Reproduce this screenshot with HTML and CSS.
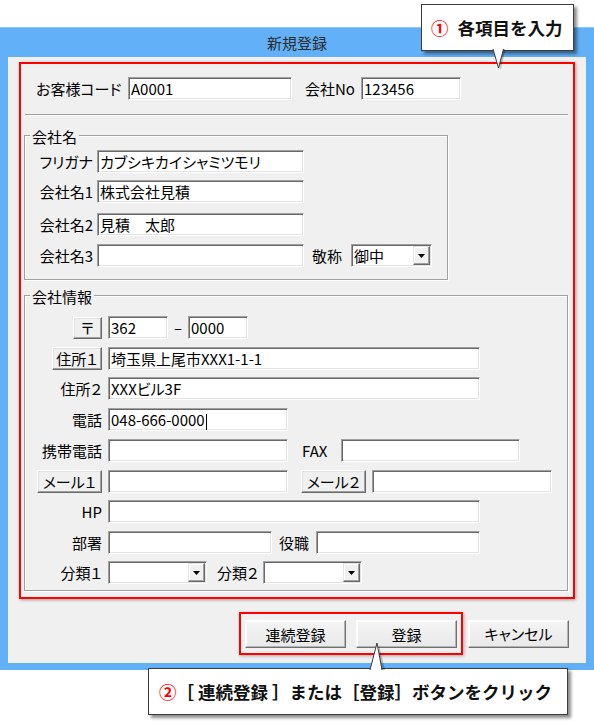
FILE: index.html
```html
<!DOCTYPE html>
<html lang="ja">
<head>
    <meta charset="UTF-8">
    <meta name="viewport" content="width=device-width, initial-scale=1.0">
    <title>新規登録</title>
    <link rel="stylesheet" href="styles.css">
</head>
<body>
    <div class="page">
        <div class="window">
            <div class="titlebar">新規登録</div>
            <div class="client">
                <div class="mark">
                    <div class="row r-top">
                        <span class="lbl code">お客様コード</span>
                        <div class="field w164">A0001</div>
                        <span class="lbl no">会社No</span>
                        <div class="field w100">123456</div>
                    </div>
                    <div class="sep"></div>

                    <div class="group company">
                        <span class="legend">会社名</span>
                        <div class="row">
                            <span class="lbl col1">フリガナ</span>
                            <div class="field w207">カブシキカイシャミツモリ</div>
                        </div>
                        <div class="row mt7">
                            <span class="lbl col1">会社名1</span>
                            <div class="field w207">株式会社見積</div>
                        </div>
                        <div class="row mt10">
                            <span class="lbl col1">会社名2</span>
                            <div class="field w207">見積　太郎</div>
                        </div>
                        <div class="row mt8">
                            <span class="lbl col1">会社名3</span>
                            <div class="field w207"></div>
                            <span class="lbl honor">敬称</span>
                            <div class="field combo w81">
                                <span class="val">御中</span>
                                <span class="arrow"><svg width="7" height="4" viewBox="0 0 7 4"><polygon points="0,0 7,0 3.5,4" fill="#000"/></svg></span>
                            </div>
                        </div>
                    </div>

                    <div class="group info">
                        <span class="legend">会社情報</span>
                        <div class="row">
                            <div class="cell"><button class="btn b-zip">〒</button></div>
                            <div class="field w60">362</div>
                            <span class="dash">–</span>
                            <div class="field w60">0000</div>
                        </div>
                        <div class="row mt8">
                            <div class="cell"><button class="btn b-addr">住所１</button></div>
                            <div class="field w372">埼玉県上尾市XXX1-1-1</div>
                        </div>
                        <div class="row mt7">
                            <div class="cell">住所２</div>
                            <div class="field w372">XXXビル3F</div>
                        </div>
                        <div class="row mt8">
                            <div class="cell">電話</div>
                            <div class="field w180">048-666-0000<span class="caret"></span></div>
                        </div>
                        <div class="row mt8">
                            <div class="cell">携帯電話</div>
                            <div class="field w180"></div>
                            <span class="lbl fax">FAX</span>
                            <div class="field w179"></div>
                        </div>
                        <div class="row mt8">
                            <div class="cell"><button class="btn b-mail">メール１</button></div>
                            <div class="field w180"></div>
                            <button class="btn b-mail m2">メール２</button>
                            <div class="field w180"></div>
                        </div>
                        <div class="row mt7">
                            <div class="cell">HP</div>
                            <div class="field w372"></div>
                        </div>
                        <div class="row mt8">
                            <div class="cell">部署</div>
                            <div class="field w164"></div>
                            <span class="lbl post">役職</span>
                            <div class="field w164"></div>
                        </div>
                        <div class="row mt7">
                            <div class="cell">分類１</div>
                            <div class="field combo w99">
                                <span class="val"></span>
                                <span class="arrow"><svg width="7" height="4" viewBox="0 0 7 4"><polygon points="0,0 7,0 3.5,4" fill="#000"/></svg></span>
                            </div>
                            <span class="lbl kind2">分類２</span>
                            <div class="field combo w99">
                                <span class="val"></span>
                                <span class="arrow"><svg width="7" height="4" viewBox="0 0 7 4"><polygon points="0,0 7,0 3.5,4" fill="#000"/></svg></span>
                            </div>
                        </div>
                    </div>
                </div>

                <div class="footer">
                    <div class="mark2">
                        <button class="btn big">連続登録</button>
                        <button class="btn big">登録</button>
                    </div>
                    <button class="btn big">キャンセル</button>
                </div>
            </div>
        </div>

        <!-- annotations -->
        <div class="callout note1"><span class="num">①</span>各項目を入力</div>
        <svg class="tail t1" width="18" height="22" viewBox="0 0 18 22">
            <path d="M5 0 L10.5 21 L15.5 0" fill="rgba(0,0,0,0.25)"/>
            <path d="M3 0 L8.5 19 L13.5 0" fill="#fff" stroke="#3c3c3c" stroke-width="1"/>
        </svg>
        <div class="callout note2"><span class="num">②</span>［ 連続登録 ］または［登録］ボタンをクリック</div>
        <svg class="tail t2" width="20" height="28" viewBox="0 0 20 28">
            <path d="M11 28 L11 3 L17 28" fill="rgba(0,0,0,0.25)"/>
            <path d="M2 28 L9 1 L14 28" fill="#fff" stroke="#3c3c3c" stroke-width="1"/>
        </svg>
    </div>
</body>
</html>
```

FILE: styles.css
```css
*
{
    margin: 0;
    padding: 0;
    box-sizing: border-box;
}
body
{
    background-color: #fff;
    font-family: "Noto Sans CJK JP", sans-serif;
    font-size: 15px;
    color: #000;
    font-feature-settings: "palt";
}
.page
{
    position: relative;
    width: 594px;
    height: 726px;
    padding-top: 27px;
}
.window
{
    background-color: #62b0f8;
    padding: 0 8px 7px 8px;
    box-shadow: inset 0 1px #8ec7fb;
}
.titlebar
{
    height: 30px;
    display: flex;
    justify-content: center;
    align-items: center;
    color: #2a2a2a;
}
.client
{
    height: 606px;
    background-color: #f0f0f0;
    padding: 5px 11px 0 11px;
}

/* red marks */
.mark
{
    height: 537px;
    border: 2px solid #ff0000;
    box-shadow: 1px 1px 3px rgba(0, 0, 0, 0.35);
    padding-top: 13px;
}
.mark2
{
    display: flex;
    gap: 10px;
    border: 2px solid #ff0000;
    padding: 6px 4px 5px 4px;
    box-shadow: 1px 1px 3px rgba(0, 0, 0, 0.3);
}

/* rows */
.row
{
    display: flex;
    align-items: center;
    height: 23px;
}
.mt7 { margin-top: 7px; }
.mt8 { margin-top: 8px; }
.mt10 { margin-top: 10px; }
.r-top
{
    padding-left: 15px;
}
.lbl
{
    flex-shrink: 0;
    white-space: nowrap;
    line-height: 19px;
}
.code { width: 92px; }
.no { width: 56px; margin-left: 13px; }
.col1
{
    width: 68px;
    margin-right: 4px;
    text-align: right;
}
.honor { width: 39px; margin-left: 8px; }
.fax { width: 39px; margin-left: 14px; }
.post { width: 40px; margin-left: 4px; padding-left: 3px; }
.kind2 { width: 46px; margin-left: 10px; }
.cell
{
    width: 77px;
    margin-right: 6px;
    display: flex;
    justify-content: flex-end;
    white-space: nowrap;
    line-height: 19px;
}
.dash
{
    width: 20px;
    text-align: center;
}
.sep
{
    margin: 14px 5px 0 4px;
    border-top: 1px solid #a0a0a0;
    border-bottom: 1px solid #fff;
}

/* group boxes */
.group
{
    position: relative;
    margin-left: 3px;
    border: 1px solid #a0a0a0;
    box-shadow: 1px 1px #fff, inset 1px 1px #fff;
}
.company
{
    width: 424px;
    margin-top: 19px;
    padding: 14px 0 12px 0;
}
.info
{
    width: 544px;
    margin-top: 15px;
    padding: 20px 0 6px 0;
}
.legend
{
    position: absolute;
    top: -9px;
    left: 5px;
    padding: 0 2px;
    background-color: #f0f0f0;
    line-height: 19px;
}

/* text boxes */
.field
{
    flex-shrink: 0;
    height: 23px;
    background-color: #fff;
    border: 1px solid;
    border-color: #a0a0a0 #fff #fff #a0a0a0;
    box-shadow: inset 1px 1px #696969, inset -1px -1px #e3e3e3;
    padding: 0 2px;
    line-height: 21px;
    white-space: nowrap;
    overflow: hidden;
}
.w60 { width: 60px; }
.w81 { width: 81px; }
.w99 { width: 99px; }
.w100 { width: 100px; }
.w164 { width: 164px; }
.w179 { width: 179px; }
.w180 { width: 180px; }
.w207 { width: 207px; }
.w372 { width: 372px; }
.caret
{
    display: inline-block;
    width: 1px;
    height: 16px;
    background-color: #000;
    vertical-align: middle;
    margin-left: 1px;
}
.combo
{
    display: flex;
    padding: 1px;
}
.combo .val
{
    flex: 1;
    padding-left: 1px;
    line-height: 19px;
}
.arrow
{
    width: 17px;
    height: 19px;
    display: flex;
    justify-content: center;
    align-items: center;
    background-color: #f0f0f0;
    border: 1px solid;
    border-color: #e3e3e3 #696969 #696969 #e3e3e3;
    box-shadow: inset -1px -1px #a0a0a0, inset 1px 1px #fff;
}

/* buttons */
.btn
{
    flex-shrink: 0;
    height: 23px;
    font: inherit;
    color: #000;
    background-color: #f0f0f0;
    border: 1px solid;
    border-color: #fff #696969 #696969 #fff;
    box-shadow: inset -1px -1px #a0a0a0, inset 1px 1px #e3e3e3;
    line-height: 19px;
    padding: 0;
    white-space: nowrap;
}
.b-zip { width: 29px; height: 22px; }
.b-addr { width: 50px; }
.b-mail { width: 65px; }
.m2 { margin-left: 13px; margin-right: 6px; }
.big
{
    width: 101px;
    height: 28px;
    background: linear-gradient(#f4f4f4, #e9e9e9);
    border-color: #fdfdfd #707070 #707070 #fdfdfd;
    box-shadow: inset -1px -1px #b4b4b4, inset 1px 1px #fff;
}

.footer
{
    display: flex;
    justify-content: flex-end;
    align-items: center;
    gap: 5px;
    margin-top: 13px;
    padding-right: 6px;
}

/* callouts */
.callout
{
    position: absolute;
    display: flex;
    align-items: center;
    height: 47px;
    background-color: #fff;
    border: 1px solid #3c3c3c;
    box-shadow: 3px 3px 3px rgba(0, 0, 0, 0.45);
    font-size: 17.5px;
    font-weight: bold;
    font-feature-settings: normal;
    white-space: nowrap;
    color: #111;
}
.note1
{
    left: 421px;
    top: 4px;
    width: 153px;
    padding-left: 9px;
}
.note2
{
    left: 148px;
    top: 668px;
    width: 420px;
    padding-left: 10px;
}
.num
{
    color: #ff0000;
}
.note1 .num
{
    margin-right: 9px;
}
.tail
{
    position: absolute;
}
.t1
{
    left: 490px;
    top: 49px;
}
.t2
{
    left: 368px;
    top: 642px;
}
```
